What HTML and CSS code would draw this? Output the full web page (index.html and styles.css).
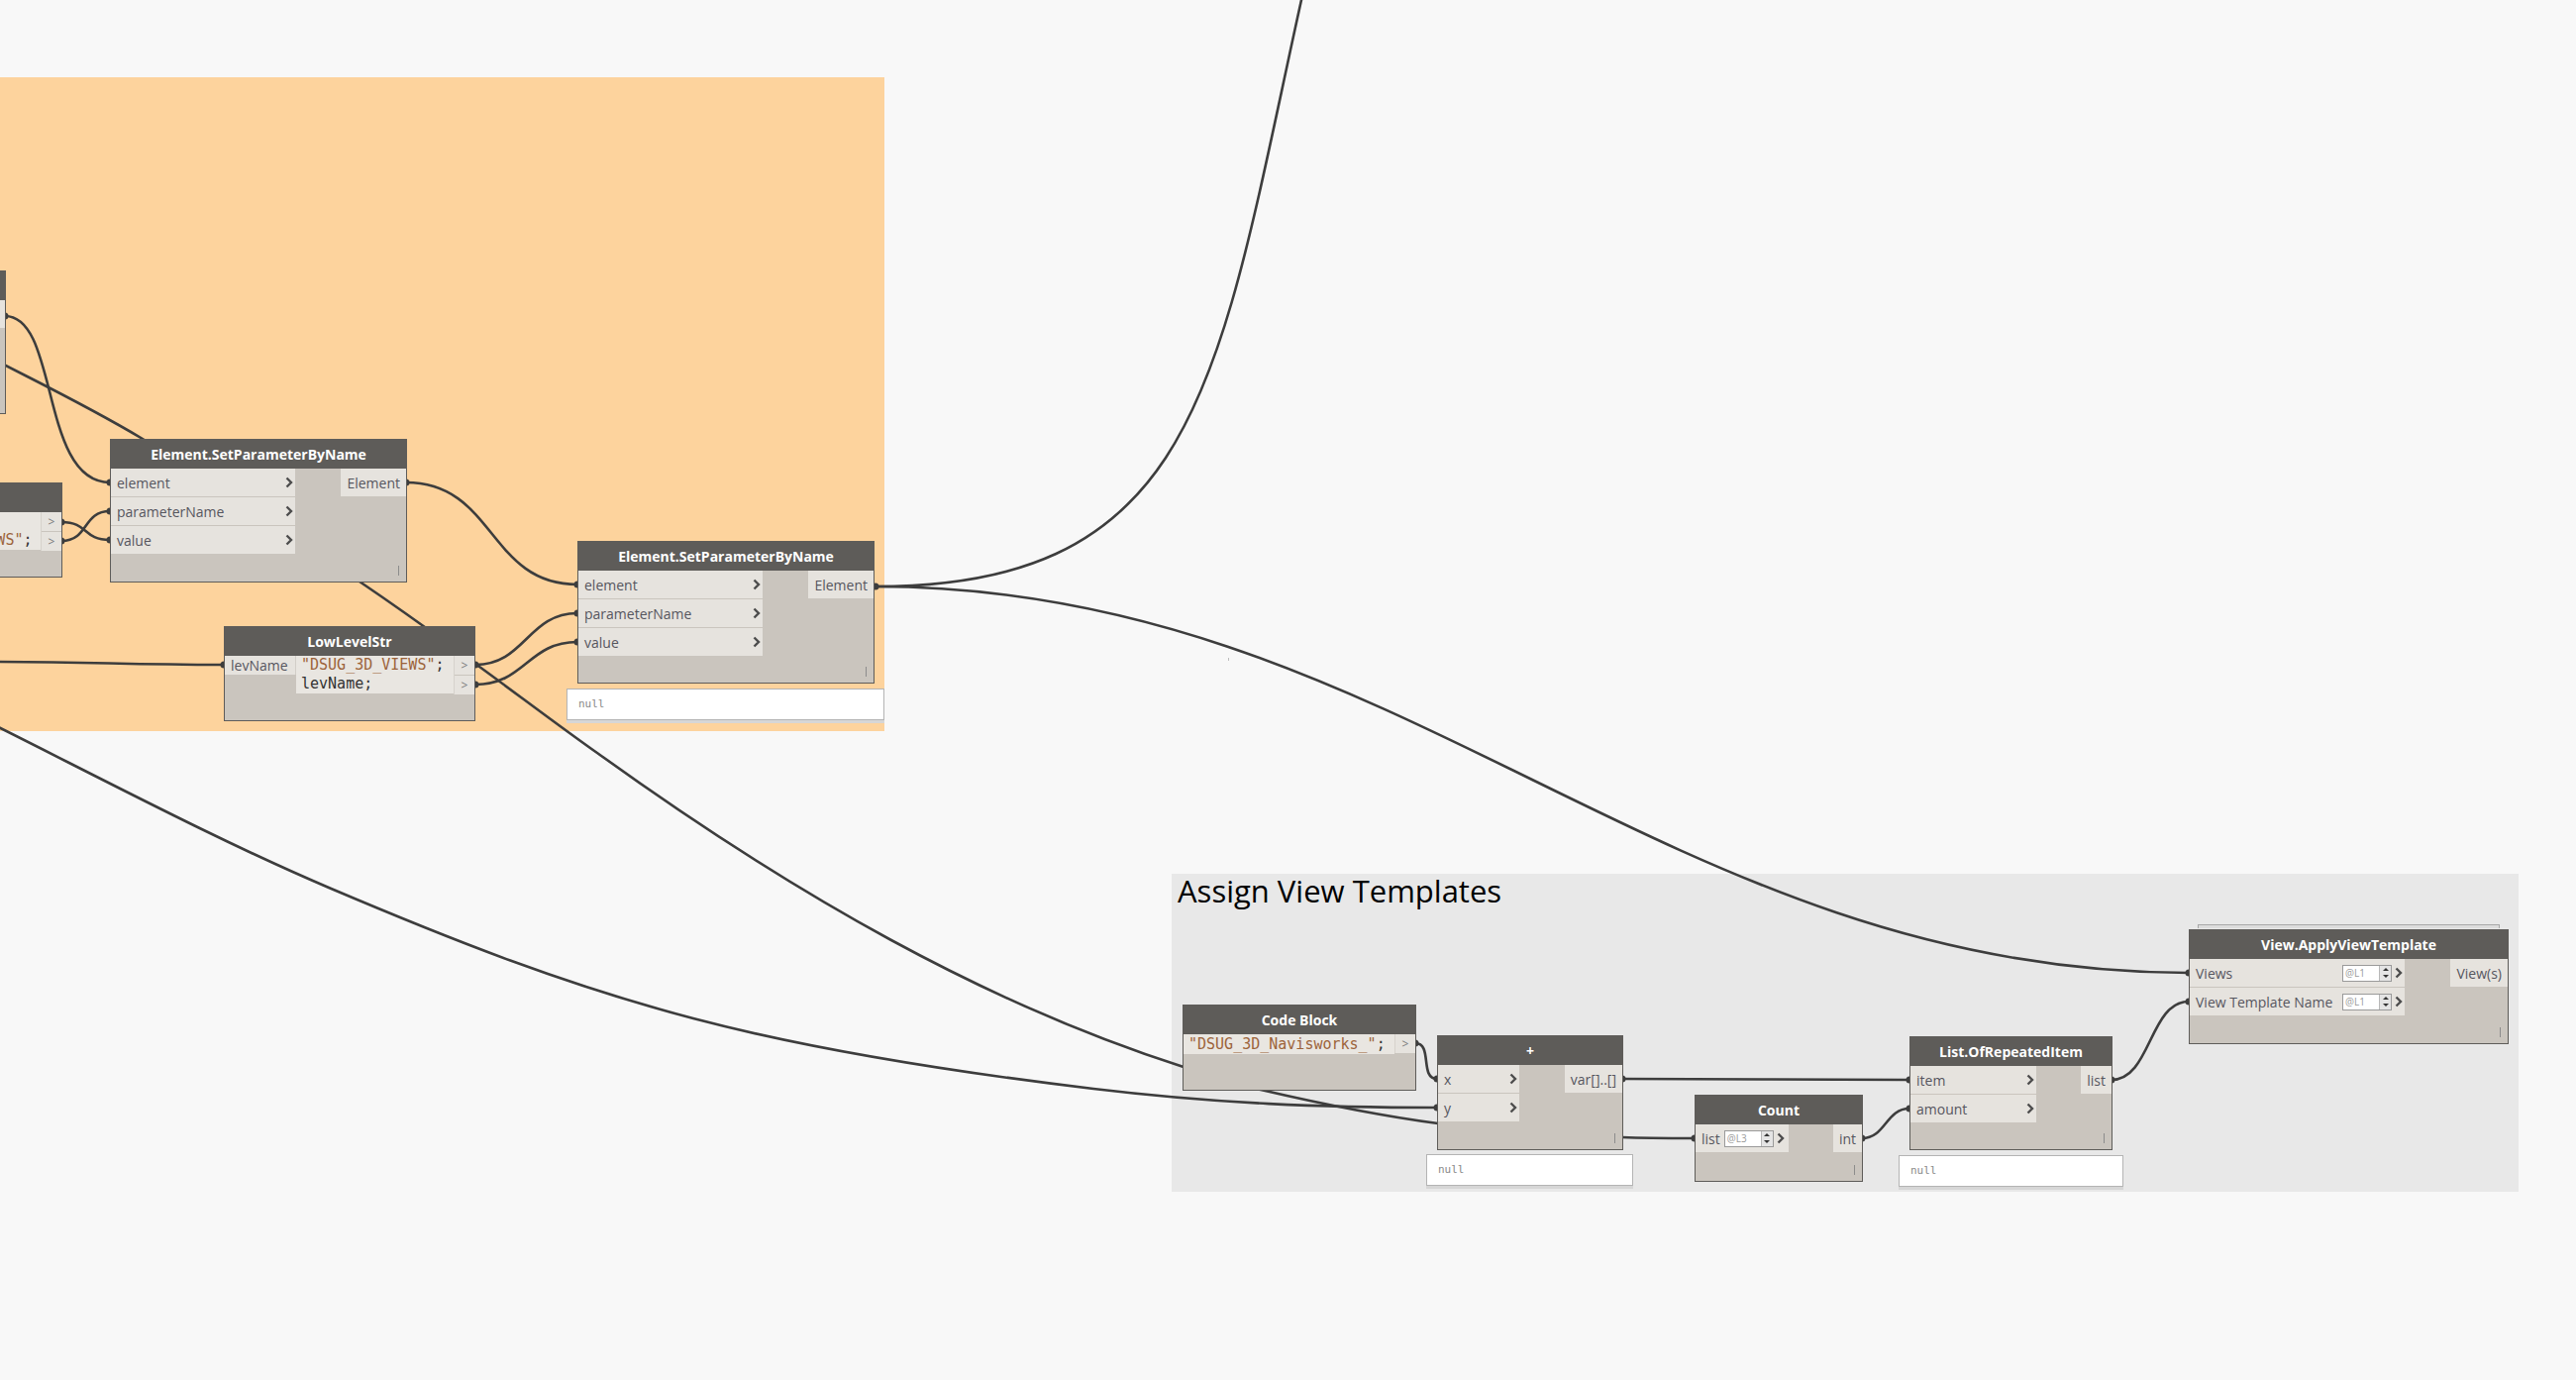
FILE: index.html
```html
<!DOCTYPE html>
<html lang="en">
<head>
    <meta charset="UTF-8">
    <title>Dynamo Graph - View Templates</title>
    <link rel="stylesheet" href="styles.css">
</head>
<body>
<div class="canvas">

    <!-- groups sit under everything -->
    <div class="group group-orange"></div>
    <div class="group group-gray">
        <div class="group-title">Assign View Templates</div>
    </div>

    <!-- wires go under the nodes -->
    <svg class="wires" width="2601" height="1393" viewBox="0 0 2601 1393">
        <path class="wire" d="M884,592 C1214,592 1230,380 1314,0 L1319,-20"/>
        <path class="wire" d="M884,592 C1414,592 1680,982 2210,982"/>
        <path class="wire" d="M410,487 C500,487 493,590 583,590"/>
        <path class="wire" d="M5,319 C60,319 40,487 111,487"/>
        <path class="wire" d="M62,527 C90,527 83,545 111,545"/>
        <path class="wire" d="M62,546 C90,546 83,516 111,516"/>
        <path class="wire" d="M-10,668 C100,668 120,671 226,671"/>
        <path class="wire" d="M480,671 C530,671 533,619 583,619"/>
        <path class="wire" d="M480,691 C530,691 533,648 583,648"/>
        <path class="wire" d="M-40,345 C21,378 77,403 144,443 C211,483 307,549 363,587 C419,625 440,641 480,670 C520,699 566,734 603,760 C803,904 995,1013 1195,1077 C1231,1089 1230,1091 1273,1100 C1316,1110 1391,1126 1452,1134 C1513,1142 1595,1146 1638,1148 C1662,1149 1690,1149 1711,1149"/>
        <path class="wire" d="M-60,705 C71,769 205,842 332,896 C459,950 571,994 700,1028 C829,1062 979,1084 1104,1099 C1229,1114 1335,1118 1451,1118"/>
        <path class="wire" d="M1429,1053 C1447,1053 1433,1089 1451,1089"/>
        <path class="wire" d="M1638,1089 C1760,1089 1810,1090 1928,1090"/>
        <path class="wire" d="M1880,1149 C1904,1149 1904,1119 1928,1119"/>
        <path class="wire" d="M2132,1090 C2172,1090 2170,1011 2210,1011"/>

        <!-- port ends -->
        <circle class="dot" cx="884" cy="592" r="3.5"/>
        <circle class="dot" cx="410" cy="487" r="3.5"/>
        <circle class="dot" cx="583" cy="590" r="3.5"/>
        <circle class="dot" cx="111" cy="487" r="3.5"/>
        <circle class="dot" cx="111" cy="516" r="3.5"/>
        <circle class="dot" cx="111" cy="545" r="3.5"/>
        <circle class="dot" cx="62" cy="527" r="3.5"/>
        <circle class="dot" cx="62" cy="546" r="3.5"/>
        <circle class="dot" cx="5" cy="319" r="3.5"/>
        <circle class="dot" cx="226" cy="671" r="3.5"/>
        <circle class="dot" cx="480" cy="671" r="3.5"/>
        <circle class="dot" cx="480" cy="691" r="3.5"/>
        <circle class="dot" cx="583" cy="619" r="3.5"/>
        <circle class="dot" cx="583" cy="648" r="3.5"/>
        <circle class="dot" cx="1429" cy="1053" r="3.5"/>
        <circle class="dot" cx="1451" cy="1089" r="3.5"/>
        <circle class="dot" cx="1451" cy="1118" r="3.5"/>
        <circle class="dot" cx="1638" cy="1089" r="3.5"/>
        <circle class="dot" cx="1711" cy="1149" r="3.5"/>
        <circle class="dot" cx="1880" cy="1149" r="3.5"/>
        <circle class="dot" cx="1928" cy="1090" r="3.5"/>
        <circle class="dot" cx="1928" cy="1119" r="3.5"/>
        <circle class="dot" cx="2132" cy="1090" r="3.5"/>
        <circle class="dot" cx="2210" cy="982" r="3.5"/>
        <circle class="dot" cx="2210" cy="1011" r="3.5"/>

        <rect x="1240" y="664" width="1" height="3" fill="#bdbdbd"/>
    </svg>

    <!-- left side, cut off by the window -->
    <div class="node n-lefttop">
        <div class="node-head"></div>
        <div class="node-body">
            <div class="inputs"></div>
            <div class="outputs">
                <div class="port-out">Element</div>
            </div>
        </div>
    </div>

    <div class="node n-leftcode">
        <div class="node-head"></div>
        <div class="code-body">
            <div class="code-text"><span class="str">"3D"</span>;
<span class="str">"DSUG_3D_VIEWS"</span>;</div>
            <div class="code-outs">
                <div class="code-out">&gt;</div>
                <div class="code-out">&gt;</div>
            </div>
        </div>
    </div>

    <div class="node n-set1">
        <div class="node-head">Element.SetParameterByName</div>
        <div class="node-body">
            <div class="inputs">
                <div class="port-in"><span class="label">element</span><svg class="chev" width="8" height="12" viewBox="0 0 8 12"><path d="M1.5 1.5 L6 6 L1.5 10.5"/></svg></div>
                <div class="port-in"><span class="label">parameterName</span><svg class="chev" width="8" height="12" viewBox="0 0 8 12"><path d="M1.5 1.5 L6 6 L1.5 10.5"/></svg></div>
                <div class="port-in"><span class="label">value</span><svg class="chev" width="8" height="12" viewBox="0 0 8 12"><path d="M1.5 1.5 L6 6 L1.5 10.5"/></svg></div>
            </div>
            <div class="outputs">
                <div class="port-out">Element</div>
            </div>
        </div>
        <span class="lace"></span>
    </div>

    <div class="node n-lowlevel">
        <div class="node-head">LowLevelStr</div>
        <div class="code-body">
            <div class="code-in">
                <div class="code-port">levName</div>
            </div>
            <div class="code-text"><span class="str">"DSUG_3D_VIEWS"</span>;
levName;</div>
            <div class="code-outs">
                <div class="code-out">&gt;</div>
                <div class="code-out">&gt;</div>
            </div>
        </div>
    </div>

    <div class="node n-set2">
        <div class="node-head">Element.SetParameterByName</div>
        <div class="node-body">
            <div class="inputs">
                <div class="port-in"><span class="label">element</span><svg class="chev" width="8" height="12" viewBox="0 0 8 12"><path d="M1.5 1.5 L6 6 L1.5 10.5"/></svg></div>
                <div class="port-in"><span class="label">parameterName</span><svg class="chev" width="8" height="12" viewBox="0 0 8 12"><path d="M1.5 1.5 L6 6 L1.5 10.5"/></svg></div>
                <div class="port-in"><span class="label">value</span><svg class="chev" width="8" height="12" viewBox="0 0 8 12"><path d="M1.5 1.5 L6 6 L1.5 10.5"/></svg></div>
            </div>
            <div class="outputs">
                <div class="port-out">Element</div>
            </div>
        </div>
        <span class="lace"></span>
    </div>
    <div class="preview pv-set2">null</div>

    <!-- Assign View Templates group -->
    <div class="node n-codeblock">
        <div class="node-head">Code Block</div>
        <div class="code-body">
            <div class="code-text"><span class="str">"DSUG_3D_Navisworks_"</span>;</div>
            <div class="code-outs">
                <div class="code-out">&gt;</div>
            </div>
        </div>
    </div>

    <div class="node n-plus">
        <div class="node-head">+</div>
        <div class="node-body">
            <div class="inputs">
                <div class="port-in"><span class="label">x</span><svg class="chev" width="8" height="12" viewBox="0 0 8 12"><path d="M1.5 1.5 L6 6 L1.5 10.5"/></svg></div>
                <div class="port-in"><span class="label">y</span><svg class="chev" width="8" height="12" viewBox="0 0 8 12"><path d="M1.5 1.5 L6 6 L1.5 10.5"/></svg></div>
            </div>
            <div class="outputs">
                <div class="port-out">var[]..[]</div>
            </div>
        </div>
        <span class="lace"></span>
    </div>
    <div class="preview pv-plus">null</div>

    <div class="node n-count">
        <div class="node-head">Count</div>
        <div class="node-body">
            <div class="inputs">
                <div class="port-in">
                    <span class="label short">list</span>
                    <span class="lvl"><span class="lvl-text">@L3</span><span class="lvl-spin"><i class="up"></i><i class="down"></i></span></span>
                    <svg class="chev" width="8" height="12" viewBox="0 0 8 12"><path d="M1.5 1.5 L6 6 L1.5 10.5"/></svg>
                </div>
            </div>
            <div class="outputs">
                <div class="port-out">int</div>
            </div>
        </div>
        <span class="lace"></span>
    </div>

    <div class="node n-repeat">
        <div class="node-head">List.OfRepeatedItem</div>
        <div class="node-body">
            <div class="inputs">
                <div class="port-in"><span class="label">item</span><svg class="chev" width="8" height="12" viewBox="0 0 8 12"><path d="M1.5 1.5 L6 6 L1.5 10.5"/></svg></div>
                <div class="port-in"><span class="label">amount</span><svg class="chev" width="8" height="12" viewBox="0 0 8 12"><path d="M1.5 1.5 L6 6 L1.5 10.5"/></svg></div>
            </div>
            <div class="outputs">
                <div class="port-out">list</div>
            </div>
        </div>
        <span class="lace"></span>
    </div>
    <div class="preview pv-repeat">null</div>

    <div class="node n-apply">
        <div class="node-head">View.ApplyViewTemplate</div>
        <div class="node-body">
            <div class="inputs">
                <div class="port-in">
                    <span class="label">Views</span>
                    <span class="lvl"><span class="lvl-text">@L1</span><span class="lvl-spin"><i class="up"></i><i class="down"></i></span></span>
                    <svg class="chev" width="8" height="12" viewBox="0 0 8 12"><path d="M1.5 1.5 L6 6 L1.5 10.5"/></svg>
                </div>
                <div class="port-in">
                    <span class="label">View Template Name</span>
                    <span class="lvl"><span class="lvl-text">@L1</span><span class="lvl-spin"><i class="up"></i><i class="down"></i></span></span>
                    <svg class="chev" width="8" height="12" viewBox="0 0 8 12"><path d="M1.5 1.5 L6 6 L1.5 10.5"/></svg>
                </div>
            </div>
            <div class="outputs">
                <div class="port-out">View(s)</div>
            </div>
        </div>
        <span class="lace"></span>
    </div>

</div>
</body>
</html>
```

FILE: styles.css
```css
/* canvas */
body {
    margin: 0;
    background-color: #f8f8f8;
    font-family: "Open Sans", sans-serif;
    overflow: hidden;
}

.canvas {
    position: relative;
    width: 2601px;
    height: 1393px;
    overflow: hidden;
}

/* groups */
.group {
    position: absolute;
}

.group-orange {
    left: -20px;
    top: 78px;
    width: 913px;
    height: 660px;
    background-color: #fdd39d;
}

.group-gray {
    left: 1183px;
    top: 882px;
    width: 1360px;
    height: 321px;
    background-color: #e8e8e8;
}

.group-title {
    padding: 2px 0 0 6px;
    font-size: 31px;
    line-height: 31px;
    color: #000;
}

/* wires */
.wires {
    position: absolute;
    left: 0;
    top: 0;
}

.wire {
    fill: none;
    stroke: #3d3d3d;
    stroke-width: 2.6;
}

.dot {
    fill: #3d3d3d;
}

/* nodes */
.node {
    position: absolute;
    box-sizing: border-box;
    border: 1px solid #5e5c59;
    background-color: #cac5be;
    display: flex;
    flex-direction: column;
}

.node-head {
    flex: none;
    height: 29px;
    background-color: #5e5c59;
    color: #fff;
    font-weight: 700;
    font-size: 14px;
    display: flex;
    align-items: center;
    justify-content: center;
    white-space: nowrap;
}

.node-body {
    display: flex;
    justify-content: space-between;
    align-items: flex-start;
}

.inputs {
    display: flex;
    flex-direction: column;
    gap: 1px;
}

.port-in {
    box-sizing: border-box;
    height: 28px;
    background-color: #e6e3de;
    display: flex;
    align-items: center;
    padding: 0 2px 0 6px;
    color: #56565e;
    font-size: 14px;
    white-space: nowrap;
}

.port-in .label {
    margin-right: auto;
    padding-right: 4px;
}

.port-in .label.short {
    margin-right: 0;
}

.chev {
    flex: none;
    margin-left: 3px;
}

.chev path {
    fill: none;
    stroke: #4d4d4d;
    stroke-width: 2.4;
}

.outputs {
    display: flex;
    flex-direction: column;
    align-items: flex-end;
    gap: 1px;
}

.port-out {
    height: 28px;
    background-color: #e6e3de;
    padding: 0 6px;
    display: flex;
    align-items: center;
    color: #56565e;
    font-size: 14px;
    white-space: nowrap;
}

.lace {
    position: absolute;
    right: 7px;
    bottom: 6px;
    width: 1px;
    height: 10px;
    background-color: #8c8c8c;
}

/* level selector */
.lvl {
    flex: none;
    display: flex;
    height: 15px;
    border: 1px solid #9a9a9a;
    background-color: #fff;
}

.lvl-text {
    width: 34px;
    padding-left: 2px;
    font-size: 10px;
    line-height: 15px;
    color: #9a9a9a;
}

.lvl-spin {
    width: 11px;
    border-left: 1px solid #b8b8b8;
    background-color: #e4e4e4;
    display: flex;
    flex-direction: column;
    align-items: center;
    justify-content: space-around;
}

.lvl-spin i {
    width: 0;
    height: 0;
    border-left: 3px solid transparent;
    border-right: 3px solid transparent;
}

.lvl-spin .up {
    border-bottom: 3px solid #333;
}

.lvl-spin .down {
    border-top: 3px solid #333;
}

/* code blocks */
.code-body {
    display: flex;
    align-items: flex-start;
}

.code-in {
    width: 71px;
    border-right: 1px solid #d2cec8;
}

.code-port {
    height: 19px;
    background-color: #e6e3de;
    padding-left: 6px;
    font-size: 14px;
    line-height: 19px;
    color: #56565e;
}

.code-text {
    flex: 1;
    background-color: #e9e6e1;
    padding: 0 5px;
    font-family: "DejaVu Sans Mono", monospace;
    font-size: 15px;
    line-height: 19px;
    color: #333;
    white-space: pre;
    overflow: hidden;
}

.code-text .str {
    color: #9c633a;
}

.code-outs {
    display: flex;
    flex-direction: column;
    gap: 1px;
    border-left: 1px solid #d6d2cc;
}

.code-out {
    width: 20px;
    height: 19px;
    background-color: #e6e3de;
    color: #7a7a7a;
    font-size: 12px;
    line-height: 19px;
    text-align: center;
}

/* previews */
.preview {
    position: absolute;
    box-sizing: border-box;
    height: 32px;
    padding-left: 11px;
    background-color: #fff;
    border: 1px solid #b4b4b4;
    box-shadow: 0 3px 0 #d6d6d6;
    font-family: "DejaVu Sans Mono", monospace;
    font-size: 11px;
    line-height: 30px;
    color: #8a8a8a;
}

.pv-set2 { left: 572px; top: 695px; width: 321px; }
.pv-plus { left: 1440px; top: 1165px; width: 209px; }
.pv-repeat { left: 1917px; top: 1166px; width: 227px; }

/* node places on the canvas */
.n-lefttop { left: -200px; top: 273px; width: 206px; height: 145px; }
.n-leftcode { left: -118px; top: 487px; width: 181px; height: 96px; }
.n-set1 { left: 111px; top: 443px; width: 300px; height: 145px; }
.n-set1 .inputs { width: 186px; }
.n-set2 { left: 583px; top: 546px; width: 300px; height: 144px; }
.n-set2 .inputs { width: 186px; }
.n-lowlevel { left: 226px; top: 632px; width: 254px; height: 96px; }
.n-codeblock { left: 1194px; top: 1014px; width: 236px; height: 87px; }
.n-codeblock .code-text { line-height: 20px; }
.n-plus { left: 1451px; top: 1045px; width: 188px; height: 116px; }
.n-plus .inputs { width: 82px; }
.n-count { left: 1711px; top: 1105px; width: 170px; height: 88px; }
.n-count .inputs { width: 94px; }
.n-repeat { left: 1928px; top: 1046px; width: 205px; height: 115px; }
.n-repeat .inputs { width: 127px; }
.n-apply { left: 2210px; top: 938px; width: 323px; height: 116px; }
.n-apply .inputs { width: 217px; }

.n-apply::before {
    content: "";
    position: absolute;
    left: 8px;
    right: 8px;
    top: -6px;
    height: 3px;
    border: 1px solid #a8a8a8;
    border-bottom: none;
    background-color: #dcdcdc;
}
```
